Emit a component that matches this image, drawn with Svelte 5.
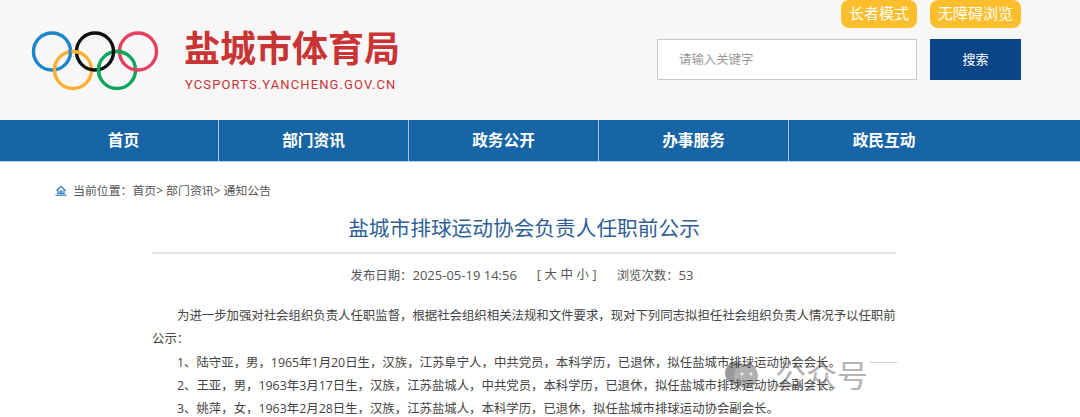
<script>
  const nav = ['首页', '部门资讯', '政务公开', '办事服务', '政民互动'];
  const lines = [
    '1、陆守亚，男，1965年1月20日生，汉族，江苏阜宁人，中共党员，本科学历，已退休，拟任盐城市排球运动协会会长。',
    '2、王亚，男，1963年3月17日生，汉族，江苏盐城人，中共党员，本科学历，已退休，拟任盐城市排球运动协会副会长。',
    '3、姚萍，女，1963年2月28日生，汉族，江苏盐城人，本科学历，已退休，拟任盐城市排球运动协会副会长。'
  ];
</script>

<div class="page">
  <header class="top">
    <div class="brand">
      <svg class="rings" width="130" height="62" viewBox="0 0 130 62" fill="none" stroke-width="3.4">
        <circle cx="42" cy="40" r="18.5" stroke="#fbb032" />
        <circle cx="86" cy="40" r="18.5" stroke="#0ba55c" />
        <circle cx="21" cy="21.5" r="18.5" stroke="#1a86c8" />
        <circle cx="64" cy="21.5" r="18.5" stroke="#111" />
        <circle cx="107" cy="21.5" r="18.5" stroke="#e8405e" />
        <path d="M24.6 33.7 A18.5 18.5 0 0 0 24.6 46.3" stroke="#fbb032" />
        <path d="M40.4 21.6 A18.5 18.5 0 0 1 50.4 23.5" stroke="#fbb032" />
        <path d="M68.6 33.7 A18.5 18.5 0 0 0 68.6 46.3" stroke="#0ba55c" />
        <path d="M84.4 21.6 A18.5 18.5 0 0 1 94.4 23.5" stroke="#0ba55c" />
      </svg>
      <div class="name">
        <div class="cn">盐城市体育局</div>
        <div class="en">YCSPORTS.YANCHENG.GOV.CN</div>
      </div>
    </div>
    <div class="tools">
      <div class="modes">
        <span class="mode m1">长者模式</span>
        <span class="mode m2">无障碍浏览</span>
      </div>
      <div class="search">
        <div class="input">请输入关键字</div>
        <div class="btn">搜索</div>
      </div>
    </div>
  </header>

  <nav class="nav">
    {#each nav as item}
      <div class="item">{item}</div>
    {/each}
  </nav>

  <div class="crumb">
    <svg width="12" height="11" viewBox="0 0 12 11" fill="none" stroke="#2a7cc4" stroke-width="1.2">
      <path d="M1.5 5.5 L6 1.5 L10.5 5.5 M3 5 V8.5 H9 V5 M5.2 8.5 V6.2 H6.8 V8.5" />
      <path d="M0.5 10.2 H11.5" />
    </svg>
    <span>当前位置：首页&gt; 部门资讯&gt; 通知公告</span>
  </div>

  <main class="article">
    <h1>盐城市排球运动协会负责人任职前公示</h1>
    <div class="meta">
      <span class="pub">发布日期：<span class="date">2025-05-19 14:56</span></span>
      <span class="size">[ 大 中 小 ]</span>
      <span>浏览次数：<span class="date">53</span></span>
    </div>
    <p class="lead">为进一步加强对社会组织负责人任职监督，根据社会组织相关法规和文件要求，现对下列同志拟担任社会组织负责人情况予以任职前公示：</p>
    {#each lines as l}
      <p>{l}</p>
    {/each}
  </main>

  <div class="mark">
    <svg width="38" height="26" viewBox="0 0 38 26">
      <circle cx="12" cy="11" r="11" fill="#9a9a9a" />
      <circle cx="22" cy="14" r="12" fill="#b0b0b0" />
      <circle cx="18" cy="12" r="1.5" fill="#eee" />
      <circle cx="27" cy="12" r="1.5" fill="#eee" />
    </svg>
    <span>公众号</span>
    <i></i>
  </div>
</div>

<style>
  :global(body) { margin: 0; background: #fff; }
  .page {
    position: relative;
    width: 1080px;
    height: 417px;
    overflow: hidden;
    font-family: "Open Sans", "Noto Sans CJK SC", sans-serif;
    color: #444;
  }
  .top {
    height: 120px;
    box-sizing: border-box;
    background: #f7f7f7;
    display: flex;
    justify-content: space-between;
    padding: 0 59px 0 31px;
  }
  .brand { display: flex; align-items: flex-start; }
  .rings { margin-top: 30px; flex: none; }
  .name { margin-left: 23px; padding-top: 29px; }
  .cn {
    font-size: 36px;
    line-height: 40px;
    font-weight: 700;
    color: #c93434;
    white-space: nowrap;
  }
  .en {
    font-family: Roboto, sans-serif;
    font-size: 13px;
    line-height: 14px;
    margin-top: 9px;
    margin-left: 1px;
    letter-spacing: 1.12px;
    color: #c93434;
    white-space: nowrap;
  }
  .tools { width: 364px; display: flex; flex-direction: column; }
  .modes { display: flex; justify-content: flex-end; gap: 13px; height: 28px; }
  .mode {
    background: #fdbe2e;
    color: #fff;
    border-radius: 8px;
    font-size: 15px;
    line-height: 27px;
    text-align: center;
  }
  .m1 { width: 76px; }
  .m2 { width: 91px; }
  .search { display: flex; gap: 13px; margin-top: 11px; }
  .input {
    width: 260px;
    height: 41px;
    box-sizing: border-box;
    background: #fff;
    border: 1px solid #c8c8c8;
    padding-left: 21px;
    font-size: 12.4px;
    line-height: 39px;
    color: #999;
  }
  .btn {
    width: 91px;
    height: 41px;
    background: #0c4488;
    color: #fff;
    font-size: 13px;
    line-height: 41px;
    text-align: center;
  }
  .nav {
    display: flex;
    height: 41px;
    background: #1765a5;
    padding-left: 29px;
    border-bottom: 1px solid #b9d2e8;
  }
  .item {
    width: 190px;
    box-sizing: border-box;
    border-right: 1px solid #a5c3de;
    color: #fff;
    font-size: 15.7px;
    font-weight: 700;
    line-height: 41px;
    text-align: center;
  }
  .item:last-child { border-right: 0; }
  .crumb {
    display: flex;
    align-items: center;
    gap: 6px;
    padding: 20px 0 0 55px;
    height: 16px;
    font-size: 11.9px;
    line-height: 16px;
    color: #555;
  }
  .article { position: relative; z-index: 1; width: 744px; margin: 16px 0 0 152px; }
  h1 {
    margin: 0;
    height: 38px;
    font-size: 20.7px;
    font-weight: 400;
    line-height: 28px;
    text-align: center;
    color: #2f5f95;
    border-bottom: 2px solid #e2e2e2;
  }
  .meta {
    display: flex;
    justify-content: center;
    gap: 20px;
    margin-top: 12px;
    padding-right: 4px;
    font-size: 12.4px;
    line-height: 18px;
    color: #555;
  }
  .date { font-size: 13px; }
  .size { word-spacing: 0.4px; }
  p {
    margin: 0;
    font-size: 12.4px;
    line-height: 23.3px;
    text-indent: 25px;
    color: #444;
  }
  .lead { margin-top: 19px; }
  .mark {
    position: absolute;
    left: 724px;
    top: 360px;
    display: flex;
    align-items: center;
    gap: 13px;
    color: #b4b4b4;
    font-size: 31px;
    line-height: 30px;
  }
  .mark i { display: block; width: 27px; height: 1px; background: #ccc; margin: -26px 0 0 -11px; }
</style>
